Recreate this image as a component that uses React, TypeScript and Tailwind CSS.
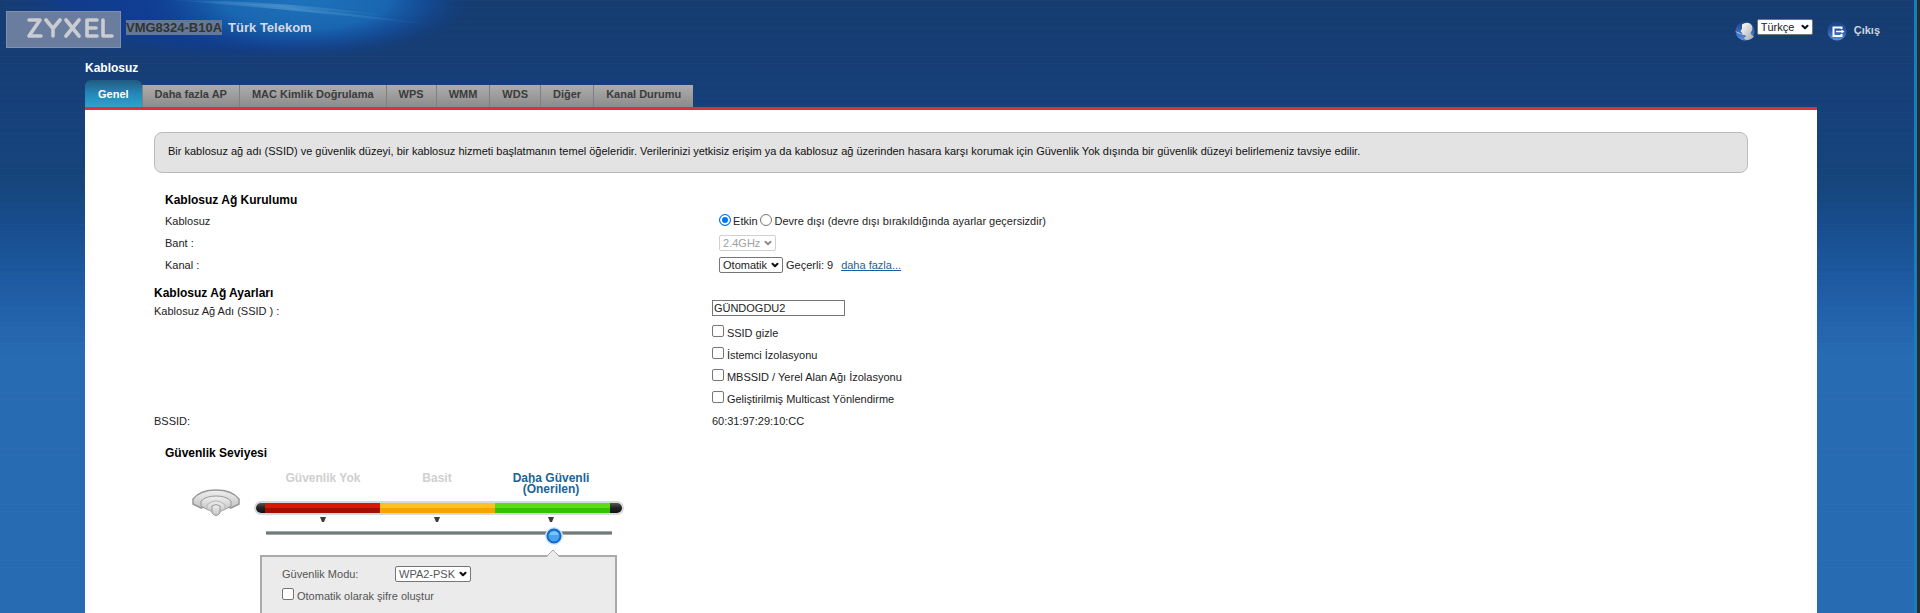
import { useId, type ReactNode } from "react";
import { clsx } from "clsx";
import { ChevronDown } from "lucide-react";

const tabs = [
  "Genel",
  "Daha fazla AP",
  "MAC Kimlik Doğrulama",
  "WPS",
  "WMM",
  "WDS",
  "Diğer",
  "Kanal Durumu",
];

const ssidOptions = [
  "SSID gizle",
  "İstemci İzolasyonu",
  "MBSSID / Yerel Alan Ağı İzolasyonu",
  "Geliştirilmiş Multicast Yönlendirme",
];

interface SelectBoxProps {
  label: string;
  value: string;
  disabled?: boolean;
  className?: string;
}

function SelectBox({ label, value, disabled, className }: SelectBoxProps) {
  return (
    <span className={clsx("relative inline-flex h-4 shrink-0", className)}>
      <select
        aria-label={label}
        disabled={disabled}
        className={clsx(
          "h-full w-full appearance-none rounded-xs border bg-white pl-[3px] leading-none",
          disabled ? "border-[#d0d0d0] text-[#a0a0a0]" : "border-[#767676]"
        )}
      >
        <option>{value}</option>
      </select>
      <ChevronDown
        strokeWidth={5}
        className={clsx(
          "pointer-events-none absolute top-[3px] right-[3px] h-2.5 w-2.5",
          disabled ? "text-[#909090]" : "text-[#111]"
        )}
      />
    </span>
  );
}

function CheckBox({ label }: { label: string }) {
  return (
    <label className="flex h-[22px] items-center gap-[3px]">
      <input
        type="checkbox"
        className="mb-1 h-3 w-3 appearance-none rounded-xs border border-[#767676] bg-white checked:bg-[#0075ff]"
      />
      {label}
    </label>
  );
}

function Row({ label, children }: { label: ReactNode; children: ReactNode }) {
  return (
    <div className="flex min-h-[22px] items-center">
      <div className="w-[35%] shrink-0">{label}</div>
      <div className="flex items-center">{children}</div>
    </div>
  );
}

function HeaderGlow() {
  return (
    <svg
      className="absolute top-0 left-0 h-[70px] w-[480px]"
      viewBox="0 0 480 70"
      aria-hidden="true"
    >
      <defs>
        <radialGradient id="glowBlue" cx="0.5" cy="0.5" r="0.5">
          <stop offset="0" stopColor="#1d72bb" />
          <stop offset="0.5" stopColor="#1a68b2" stopOpacity="0.95" />
          <stop offset="0.75" stopColor="#1553a0" stopOpacity="0.6" />
          <stop offset="1" stopColor="#123f8a" stopOpacity="0" />
        </radialGradient>
        <radialGradient id="glowDeep" cx="0.5" cy="0.5" r="0.5">
          <stop offset="0" stopColor="#0e3f9c" />
          <stop offset="0.65" stopColor="#103c93" stopOpacity="0.8" />
          <stop offset="1" stopColor="#153d74" stopOpacity="0" />
        </radialGradient>
        <linearGradient id="streak" x1="0" x2="1" y1="0" y2="0">
          <stop offset="0" stopColor="#5aa0d8" stopOpacity="0.1" />
          <stop offset="0.45" stopColor="#6aa8d8" stopOpacity="0.5" />
          <stop offset="1" stopColor="#3b86c8" stopOpacity="0" />
        </linearGradient>
      </defs>
      <ellipse cx="230" cy="4" rx="250" ry="62" fill="url(#glowDeep)" />
      <ellipse cx="305" cy="0" rx="165" ry="58" fill="url(#glowBlue)" />
      <path d="M170 0 Q300 4 440 26 Q300 10 170 0Z" fill="url(#streak)" />
      <path d="M185 0 Q300 2 400 17 Q300 8 185 0Z" fill="url(#streak)" />
    </svg>
  );
}

function ZyxelLogo() {
  return (
    <svg className="h-5 w-[88px]" viewBox="0 0 88 20" role="img" aria-label="ZYXEL">
      <g
        fill="none"
        stroke="#c9ccd0"
        strokeWidth="3.600"
        strokeLinecap="round"
        strokeLinejoin="round"
      >
        <path d="M3 2H14L3 18H15" />
        <path d="M20 2L27 10.500L34 2M27 10.500V18" />
        <path d="M40 2L53 18M53 2L40 18" />
        <path d="M71 2H61V18H71M61 10H70" />
        <path d="M77 2V18H86" />
      </g>
    </svg>
  );
}

function UserIcon() {
  return (
    <svg className="h-5 w-5" viewBox="0 0 20 20" aria-hidden="true">
      <defs>
        <linearGradient id="userBall" x1="0" x2="0" y1="0" y2="1">
          <stop offset="0" stopColor="#1c3f86" />
          <stop offset="1" stopColor="#5c8ee0" />
        </linearGradient>
        <linearGradient id="userHead" x1="0" x2="1" y1="0" y2="1">
          <stop offset="0" stopColor="#ffffff" />
          <stop offset="1" stopColor="#a5a9ae" />
        </linearGradient>
      </defs>
      <circle cx="10" cy="10" r="9.500" fill="url(#userBall)" />
      <path
        d="M7 3.500Q11 .8 15 2.500Q18.500 5 17 9.500L15.500 12Q16 14 19 15.500Q16 19 11.500 19Q9 18 9 17L11 15.500L10 14H7.500L7 12L5.500 10L7 8Z"
        fill="url(#userHead)"
      />
      <path d="M0 10L4 11.500Q6 13 9 13.500Q4 14 0 10Z" fill="#9fc1f0" />
    </svg>
  );
}

function LogoutIcon() {
  return (
    <svg className="h-5 w-5" viewBox="0 0 20 20" aria-hidden="true">
      <defs>
        <linearGradient id="exitBall" x1="0" x2="0" y1="0" y2="1">
          <stop offset="0" stopColor="#1a4080" />
          <stop offset="0.5" stopColor="#2b58a8" />
          <stop offset="1" stopColor="#5f8fdc" />
        </linearGradient>
      </defs>
      <circle cx="10" cy="10" r="9.500" fill="url(#exitBall)" />
      <path d="M14.500 8V6.500H6.500V15H14.500V13" fill="none" stroke="#fff" strokeWidth="2" />
      <path d="M9 10.500H16" stroke="#fff" strokeWidth="1.500" />
      <path d="M14.500 8.500L17.500 10.500L14.500 12.500Z" fill="#fff" />
    </svg>
  );
}

function SignalIcon() {
  return (
    <svg className="h-7 w-12" viewBox="0 0 48 28" aria-hidden="true">
      <defs>
        <linearGradient id="signal" x1="0" x2="0" y1="0" y2="1">
          <stop offset="0" stopColor="#f0f0f0" />
          <stop offset="1" stopColor="#c4c4c4" />
        </linearGradient>
      </defs>
      <g fill="url(#signal)" stroke="#999" strokeLinejoin="round">
        <path d="M1 10Q8 1 24 1T47 10V15L39 19L32 17H16L9 19L1 15Z" strokeWidth="1.500" />
        <path d="M9 12Q14 7 24 7T39 12V17L32 21L27 19H21L16 21L9 17Z" />
        <path d="M15 16Q19 12 24 12T33 16V20L28 23H20L15 20Z" stroke="#b5b5b5" />
        <path d="M20 17Q24 14 28 17V24Q24 29 20 24Z" />
      </g>
    </svg>
  );
}

function LevelTick() {
  return (
    <svg className="h-[5px] w-1.5" viewBox="0 0 6 5" aria-hidden="true">
      <path d="M0 0H6L4 5H2Z" fill="#3c3c3c" />
    </svg>
  );
}

function SecurityLevel() {
  return (
    <div className="w-[370px]">
      <div className="grid h-7 grid-cols-3 pr-4 pl-3 text-center text-xs leading-[11px] font-bold text-[#cfcfcf]">
        <span>Güvenlik Yok</span>
        <span>Basit</span>
        <span className="text-[#1b6496]">
          Daha Güvenli
          <br />
          (Önerilen)
        </span>
      </div>
      <div className="flex h-3.5 overflow-hidden rounded-full border-2 border-[#d5dade]">
        <span className="w-[9px] bg-linear-to-b from-[#555] via-[#222] to-[#111]" />
        <span className="flex-1 bg-linear-to-b from-[#d81800] from-45% to-[#a01000] to-55%" />
        <span className="flex-1 bg-linear-to-b from-[#ffc021] from-45% to-[#f5a400] to-55%" />
        <span className="flex-1 bg-linear-to-b from-[#5ade10] from-45% to-[#32c200] to-55%" />
        <span className="w-3 bg-linear-to-b from-[#555] via-[#222] to-[#111]" />
      </div>
      <div className="mt-0.5 grid grid-cols-3 justify-items-center pr-4 pl-3">
        <LevelTick />
        <LevelTick />
        <LevelTick />
      </div>
      <div className="relative mt-[9px] px-3">
        <div className="h-1 border-y border-[#a3a8a8] bg-[#737878]" />
        <input
          type="range"
          min={0}
          max={2}
          defaultValue={2}
          aria-label="Güvenlik Seviyesi"
          className="absolute inset-x-0 top-0 m-0 h-1 w-full opacity-0"
        />
        <svg
          className="pointer-events-none absolute -top-1 left-[291px] h-[18px] w-[18px]"
          viewBox="0 0 18 18"
          aria-hidden="true"
        >
          <circle cx="9" cy="9" r="9" fill="#c9e6fb" />
          <circle cx="9" cy="9" r="6.500" fill="#4aa3ee" stroke="#1268c4" strokeWidth="2" />
          <path d="M4.500 8Q5 4.500 9 4.500T13.500 8Z" fill="#7cc4f8" />
        </svg>
      </div>
    </div>
  );
}

export default function App() {
  const ssidId = useId();

  return (
    <div className="flex min-h-screen bg-[#2b2b2b] font-['Liberation_Sans',Arial,sans-serif] text-[11px] leading-[14px] text-[#222]">
      <div className="relative flex flex-1 flex-col border-r-[3px] border-[#117fc0] bg-[repeating-linear-gradient(to_bottom,rgba(255,255,255,0.012)_0px,rgba(255,255,255,0.012)_1px,transparent_1px,transparent_7px),linear-gradient(to_bottom,#163c70_0px,#16407a_110px,#15457b_185px,#174c8c_220px,#1b5599_260px,#205ea8_300px,#276bb2_355px,#276bb3_613px)]">
        <HeaderGlow />

        <header className="relative flex items-start justify-between pt-[11px] pr-[34px] pl-1.5">
          <div className="flex items-start text-[13px] font-bold">
            <div className="flex h-[37px] w-[115px] items-center justify-end border border-[#7f90b4] bg-[#6b7d9f] pr-1.5 pb-1">
              <ZyxelLogo />
            </div>
            <p className="mt-[9px] ml-[5px] leading-4 text-[#d5dae2]">
              <span className="bg-[#647997] text-[#333]">VMG8324-B10A</span>
              <span className="ml-1.5">Türk Telekom</span>
            </p>
          </div>
          <div className="flex items-start pt-2">
            <div className="mt-0.5 mr-0.5">
              <UserIcon />
            </div>
            <SelectBox label="Dil" value="Türkçe" className="w-14" />
            <a
              href="#cikis"
              className="mt-0.5 ml-3.5 flex items-start gap-[7px] font-bold text-[#ccd3dd]"
            >
              <LogoutIcon />
              <span className="mt-0.5">Çıkış</span>
            </a>
          </div>
        </header>

        <div className="relative mr-[97px] ml-[85px] flex flex-1 flex-col pt-[13px]">
          <h1 className="text-xs leading-[14px] font-bold text-white">Kablosuz</h1>

          <nav className="mt-[5px] flex items-end">
            {tabs.map((tab, index) => (
              <button
                key={tab}
                type="button"
                className={clsx(
                  "font-bold",
                  index === 0
                    ? "h-[27px] rounded-t-md bg-linear-to-b from-[#205a80] via-[#2587b8] to-[#2ba3cc] px-[13px] text-white"
                    : "h-[22px] border-l border-[#808080] bg-linear-to-b from-[#adadad] to-[#8c8c8c] px-3 pb-1 text-[#3c3c3c]"
                )}
              >
                {tab}
              </button>
            ))}
          </nav>

          <main className="flex flex-1 flex-col border-t-[3px] border-[#d8323a] bg-white px-[69px] pt-[22px]">
            <p className="rounded-lg border border-[#bbb] bg-[#e3e3e3] px-[13px] pt-[11px] pb-3.5 text-[#111]">
              Bir kablosuz ağ adı (SSID) ve güvenlik düzeyi, bir kablosuz hizmeti başlatmanın
              temel öğeleridir. Verilerinizi yetkisiz erişim ya da kablosuz ağ üzerinden hasara
              karşı korumak için Güvenlik Yok dışında bir güvenlik düzeyi belirlemeniz tavsiye
              edilir.
            </p>

            <section className="mt-[19px] pl-[11px]">
              <h2 className="text-xs leading-4 font-bold text-black">Kablosuz Ağ Kurulumu</h2>
              <div className="mt-0.5">
                <Row label="Kablosuz">
                  <label className="flex items-center gap-0.5">
                    <input
                      type="radio"
                      name="wireless"
                      defaultChecked
                      className="mb-0.5 h-3 w-3 appearance-none rounded-full border border-[#767676] checked:border-[#0075ff] checked:bg-[#0075ff] checked:ring-2 checked:ring-white checked:ring-inset"
                    />
                    Etkin
                  </label>
                  <label className="ml-0.5 flex items-center gap-[3px]">
                    <input
                      type="radio"
                      name="wireless"
                      className="mb-0.5 h-3 w-3 appearance-none rounded-full border border-[#767676] checked:border-[#0075ff] checked:bg-[#0075ff] checked:ring-2 checked:ring-white checked:ring-inset"
                    />
                    Devre dışı (devre dışı bırakıldığında ayarlar geçersizdir)
                  </label>
                </Row>
                <Row label="Bant :">
                  <SelectBox label="Bant" value="2.4GHz" disabled className="w-[57px]" />
                </Row>
                <Row label="Kanal :">
                  <SelectBox label="Kanal" value="Otomatik" className="w-16" />
                  <span className="ml-[3px]">Geçerli: 9</span>
                  <a href="#kanal" className="ml-2 text-[#1b5f9e] underline">
                    daha fazla...
                  </a>
                </Row>
              </div>
            </section>

            <section className="mt-2.5">
              <h2 className="text-xs leading-[14px] font-bold text-black">Kablosuz Ağ Ayarları</h2>
              <div className="flex">
                <label htmlFor={ssidId} className="w-[35%] shrink-0 pt-1">
                  Kablosuz Ağ Adı (SSID ) :
                </label>
                <div>
                  <input
                    id={ssidId}
                    type="text"
                    defaultValue="GÜNDOGDU2"
                    className="block h-4 w-[133px] border border-[#767676] bg-white px-px"
                  />
                  <div className="mt-1.5">
                    {ssidOptions.map((option) => (
                      <CheckBox key={option} label={option} />
                    ))}
                  </div>
                </div>
              </div>
              <Row label="BSSID:">60:31:97:29:10:CC</Row>
            </section>

            <section className="mt-[13px] flex flex-1 flex-col pl-[11px]">
              <h2 className="text-xs leading-4 font-bold text-black">Güvenlik Seviyesi</h2>
              <div className="mt-3 flex pl-[27px]">
                <div className="mt-4 mr-3.5">
                  <SignalIcon />
                </div>
                <SecurityLevel />
              </div>
              <div className="relative mt-5 ml-[95px] w-[357px] flex-1 border-2 border-b-0 border-[#aaa] bg-[#ebebeb] px-5 pt-[9px] text-[#555]">
                <svg
                  className="absolute -top-[7px] left-[284px] h-2 w-3.5"
                  viewBox="0 0 14 8"
                  aria-hidden="true"
                >
                  <path d="M0 8L7 0L14 8Z" fill="#ebebeb" />
                  <path d="M0 7L7 0L14 7" fill="none" stroke="#aaa" />
                </svg>
                <div className="flex items-center">
                  <span className="w-[113px]">Güvenlik Modu:</span>
                  <SelectBox label="Güvenlik Modu" value="WPA2-PSK" className="w-[76px]" />
                </div>
                <div className="mt-[3px]">
                  <CheckBox label="Otomatik olarak şifre oluştur" />
                </div>
              </div>
            </section>
          </main>
        </div>
      </div>
      <div className="w-[3px] shrink-0" />
    </div>
  );
}
